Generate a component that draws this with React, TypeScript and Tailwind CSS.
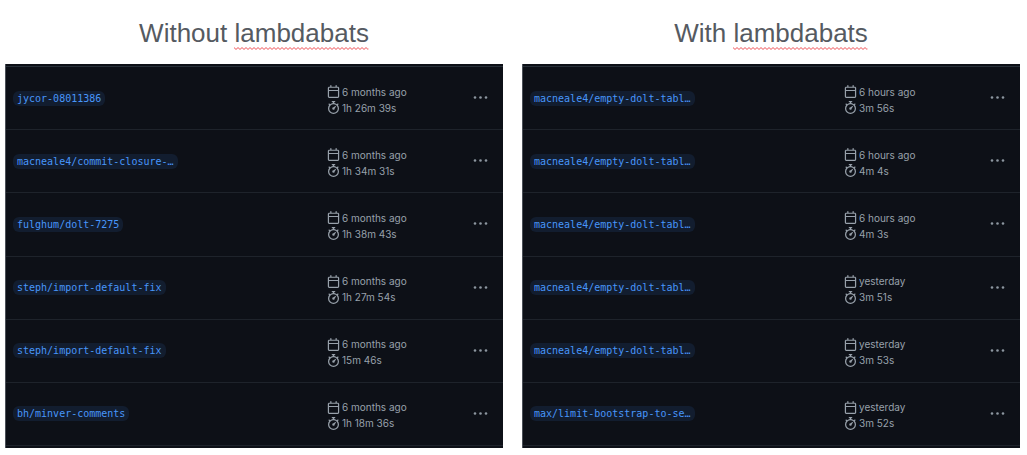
import clsx from 'clsx';

type Run = {
  branch: string;
  when: string;
  duration: string;
};

const withoutRuns: Run[] = [
  { branch: 'jycor-08011386', when: '6 months ago', duration: '1h 26m 39s' },
  { branch: 'macneale4/commit-closure-…', when: '6 months ago', duration: '1h 34m 31s' },
  { branch: 'fulghum/dolt-7275', when: '6 months ago', duration: '1h 38m 43s' },
  { branch: 'steph/import-default-fix', when: '6 months ago', duration: '1h 27m 54s' },
  { branch: 'steph/import-default-fix', when: '6 months ago', duration: '15m 46s' },
  { branch: 'bh/minver-comments', when: '6 months ago', duration: '1h 18m 36s' },
];

const withRuns: Run[] = [
  { branch: 'macneale4/empty-dolt-tabl…', when: '6 hours ago', duration: '3m 56s' },
  { branch: 'macneale4/empty-dolt-tabl…', when: '6 hours ago', duration: '4m 4s' },
  { branch: 'macneale4/empty-dolt-tabl…', when: '6 hours ago', duration: '4m 3s' },
  { branch: 'macneale4/empty-dolt-tabl…', when: 'yesterday', duration: '3m 51s' },
  { branch: 'macneale4/empty-dolt-tabl…', when: 'yesterday', duration: '3m 53s' },
  { branch: 'max/limit-bootstrap-to-se…', when: 'yesterday', duration: '3m 52s' },
];

const CalendarIcon = () => (
  <svg viewBox="0 0 16 16" width={13} height={13} fill="currentColor" aria-hidden="true">
    <path d="M4.75 0a.75.75 0 0 1 .75.75V2h5V.75a.75.75 0 0 1 1.5 0V2h1.25c.966 0 1.75.784 1.75 1.75v10.5A1.75 1.75 0 0 1 13.25 16H2.75A1.75 1.75 0 0 1 1 14.25V3.75C1 2.784 1.784 2 2.75 2H4V.75A.75.75 0 0 1 4.75 0ZM2.5 7.5v6.75c0 .138.112.25.25.25h10.5a.25.25 0 0 0 .25-.25V7.5Zm10.75-4H2.75a.25.25 0 0 0-.25.25V6h11V3.75a.25.25 0 0 0-.25-.25Z" />
  </svg>
);

const StopwatchIcon = () => (
  <svg viewBox="0 0 16 16" width={13} height={13} fill="currentColor" aria-hidden="true">
    <path d="M5.75.75A.75.75 0 0 1 6.5 0h3a.75.75 0 0 1 0 1.5h-.75v1l-.001.041a6.724 6.724 0 0 1 3.464 1.435l.007-.006.75-.75a.749.749 0 0 1 1.275.326.749.749 0 0 1-.215.734l-.75.75-.006.007a6.75 6.75 0 1 1-10.548 0L2.72 5.03l-.75-.75a.751.751 0 0 1 .018-1.042.751.751 0 0 1 1.042-.018l.75.75.007.006A6.72 6.72 0 0 1 7.25 2.541V1.5H6.5a.75.75 0 0 1-.75-.75ZM8 14.5a5.25 5.25 0 1 0-.001-10.501A5.25 5.25 0 0 0 8 14.5Zm.389-6.7 1.33-1.33a.75.75 0 1 1 1.061 1.06L9.45 8.861A1.503 1.503 0 0 1 8 10.75a1.499 1.499 0 1 1 .389-2.95Z" />
  </svg>
);

const DotsIcon = () => (
  <svg viewBox="0 0 15 15" width={15} height={15} fill="currentColor" aria-hidden="true">
    <circle cx="2" cy="7.5" r="1.3" />
    <circle cx="7.5" cy="7.5" r="1.3" />
    <circle cx="13" cy="7.5" r="1.3" />
  </svg>
);

// spell-check squiggle, repeats along the width of the word
const Squiggle = ({ id }: { id: string }) => (
  <svg className="absolute bottom-px left-0 h-[3px] w-full" aria-hidden="true">
    <defs>
      <pattern id={id} width="4" height="3" patternUnits="userSpaceOnUse">
        <path d="M-1 1.5 0 .5 2 2.5 4 .5 5 1.5" fill="none" stroke="#ee4a50" strokeWidth="1" />
      </pattern>
    </defs>
    <rect width="100%" height="3" fill={`url(#${id})`} />
  </svg>
);

const RunRow = ({ run }: { run: Run }) => (
  <li className="flex flex-1 items-center border-b border-[#1e232b] pr-[15px] pl-[7px]">
    <div className="flex flex-1">
      <a
        href="#"
        className="rounded-md bg-[#121d2f] px-1 font-['DejaVu_Sans_Mono',monospace] text-[10px] leading-[15px] text-[#4896fa]"
      >
        {run.branch}
      </a>
    </div>
    <div className="w-[146px] pt-[3px] text-[10px] leading-4 text-[#98a1ab]">
      <div className="flex items-center gap-0.5">
        <CalendarIcon />
        <span>{run.when}</span>
      </div>
      <div className="flex items-center gap-0.5">
        <StopwatchIcon />
        <span>{run.duration}</span>
      </div>
    </div>
    <button type="button" aria-label="Show options" className="pb-px text-[#8d96a0]">
      <DotsIcon />
    </button>
  </li>
);

const RunPanel = ({ id, prefix, runs, className }: { id: string; prefix: string; runs: Run[]; className?: string }) => (
  <section className={clsx('min-w-0 flex-1', className)}>
    <h2 className="pt-[15px] pb-[13px] text-center font-['Liberation_Sans',Arial,sans-serif] text-[26px] leading-9 text-[#555a61]">
      {prefix}{' '}
      <span className="relative inline-block">
        lambdabats
        <Squiggle id={id} />
      </span>
    </h2>
    <div className="border-l border-[#4b5058] bg-[#0d1017] pt-0.5 pb-0.5">
      <ul className="flex min-h-[380px] flex-col border-t border-[#272f38]">
        {runs.map((run, i) => (
          <RunRow key={i} run={run} />
        ))}
      </ul>
    </div>
  </section>
);

export default function App() {
  return (
    <main className="flex gap-[19px] bg-white pr-[7px] pl-[5px] font-['Inter',sans-serif]">
      <RunPanel id="squiggle-without" prefix="Without" runs={withoutRuns} />
      <RunPanel id="squiggle-with" prefix="With" runs={withRuns} />
    </main>
  );
}
